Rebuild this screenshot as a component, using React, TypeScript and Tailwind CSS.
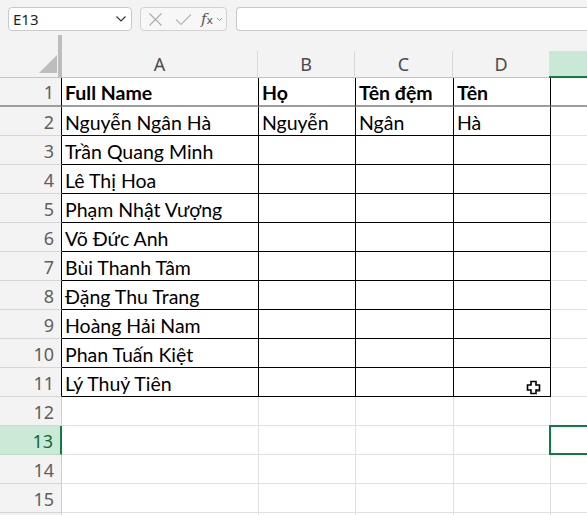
import React from "react";

const names = [
  "Nguyễn Ngân Hà",
  "Trần Quang Minh",
  "Lê Thị Hoa",
  "Phạm Nhật Vượng",
  "Võ Đức Anh",
  "Bùi Thanh Tâm",
  "Đặng Thu Trang",
  "Hoàng Hải Nam",
  "Phan Tuấn Kiệt",
  "Lý Thuỷ Tiên",
];

const cellFont = { fontFamily: "Lato, 'Noto Sans', sans-serif" };
const uiFont = { fontFamily: "'Noto Sans', 'Open Sans', sans-serif" };

function Cursor() {
  return (
    <svg
      width="16"
      height="16"
      viewBox="0 0 16 16"
      className="absolute left-[72px] top-[12px]"
    >
      <path
        d="M5 1.5h5v3.5h3.5v5H10v3.5H5V10H1.5V5H5z"
        fill="#fff"
        stroke="#000"
        strokeWidth="1.6"
        strokeLinejoin="miter"
      />
      <path d="M10.8 11h3.5M11 14.3h-0.2" stroke="#000" strokeWidth="1" />
    </svg>
  );
}

function DataRow({ n, cells, bold }: { n: number; cells: string[]; bold?: boolean }) {
  const first = n === 1;
  const bb = first ? "border-b-2 border-b-[#9d9d9d]" : "border-b border-b-black";
  const cellBase = `flex items-end pl-[3px] pb-[3px] text-[19.5px] leading-none text-black border-r border-r-black ${bb} ${
    bold ? "font-bold" : ""
  } whitespace-nowrap overflow-hidden`;
  return (
    <div className="flex h-[29px] shrink-0" style={cellFont}>
      <div
        className={`w-[62px] shrink-0 flex items-end justify-end pr-[7px] pb-[4px] bg-[#f3f3f3] text-[#5f5f5f] text-[18px] leading-none border-r border-r-black ${
          first ? "border-b-2 border-b-[#9d9d9d]" : "border-b border-b-[#d6d6d6]"
        }`}
        style={uiFont}
      >
        {n}
      </div>
      <div className={`w-[197px] shrink-0 ${cellBase}`}>{cells[0]}</div>
      <div className={`w-[97px] shrink-0 ${cellBase}`}>{cells[1]}</div>
      <div className={`w-[98px] shrink-0 ${cellBase}`}>{cells[2]}</div>
      <div className={`w-[97px] shrink-0 relative ${cellBase}`}>
        {cells[3]}
        {n === 11 && <Cursor />}
      </div>
      <div
        className={`flex-1 ${
          first ? "border-b-2 border-b-[#9d9d9d]" : "border-b border-b-[#e1e1e1]"
        }`}
      />
    </div>
  );
}

function EmptyRow({ n, label = true }: { n: number; label?: boolean }) {
  const sel = n === 13;
  const g = "border-r border-r-[#e1e1e1] border-b border-b-[#e1e1e1]";
  return (
    <div className="flex h-[29px] shrink-0">
      <div
        className={`w-[62px] shrink-0 flex items-end justify-end pb-[4px] text-[18px] leading-none border-b ${
          sel
            ? "bg-[#cbe9d7] text-[#0f6a37] border-r-2 border-r-[#107c41] border-b-[#bcd9c7] pr-[7px]"
            : "bg-[#f3f3f3] text-[#5f5f5f] border-r border-r-[#cfcfcf] border-b-[#d6d6d6] pr-[7px]"
        }`}
        style={uiFont}
      >
        {label ? n : null}
      </div>
      <div className={`w-[197px] shrink-0 ${g}`} />
      <div className={`w-[97px] shrink-0 ${g}`} />
      <div className={`w-[98px] shrink-0 ${g}`} />
      <div className={`w-[97px] shrink-0 ${g}`} />
      <div className="flex-1 relative border-b border-b-[#e1e1e1]">
        {sel && (
          <div className="absolute left-[-2px] top-[-1px] right-[-2px] bottom-[-1px] border-2 border-[#107c41]" />
        )}
      </div>
    </div>
  );
}

export default function App() {
  const rows: string[][] = [
    ["Full Name", "Họ", "Tên đệm", "Tên"],
    ["Nguyễn Ngân Hà", "Nguyễn", "Ngân", "Hà"],
    ...names.slice(1).map((x) => [x, "", "", ""]),
  ];

  return (
    <div className="w-[587px] h-[515px] overflow-hidden bg-[#f3f3f3] flex flex-col" style={uiFont}>
      {/* Formula bar */}
      <div className="h-[35px] shrink-0 flex items-start pt-[7px] pl-[8px]">
        <div className="w-[124px] h-[24px] bg-white border border-[#c9c9c9] rounded-[4px] flex items-center justify-between pl-[4px] pr-[4px]">
          <span className="text-[15px] text-[#1f1f1f] leading-none">E13</span>
          <svg width="12" height="8" viewBox="0 0 12 8">
            <path d="M1.5 1.5l4.5 4.5 4.5-4.5" fill="none" stroke="#333" strokeWidth="1.2" />
          </svg>
        </div>
        <div className="ml-[8px] w-[87px] h-[24px] bg-[#f7f7f7] border border-[#d2d2d2] rounded-[4px] flex items-center pl-[7px]">
          <svg width="15" height="15" viewBox="0 0 15 15">
            <path d="M1.5 1.5l12 12M13.5 1.5l-12 12" stroke="#ababab" strokeWidth="1.1" />
          </svg>
          <svg width="17" height="13" viewBox="0 0 17 13" className="ml-[12px]">
            <path d="M1 6.5l5 5L16 1.5" fill="none" stroke="#b5b5b5" strokeWidth="1.1" />
          </svg>
          <span
            className="ml-[9px] text-[#555] text-[15px] leading-none italic"
            style={{ fontFamily: "'DejaVu Serif', 'Liberation Serif', serif" }}
          >
            f<span className="text-[11px] not-italic" style={{ fontFamily: "'DejaVu Sans', sans-serif" }}>x</span>
          </span>
          <svg width="7" height="5" viewBox="0 0 7 5" className="ml-[3px]">
            <path d="M1 1l2.5 2.5L6 1" fill="none" stroke="#999" strokeWidth="1" />
          </svg>
        </div>
        <div className="ml-[9px] flex-1 h-[24px] bg-white border border-[#c9c9c9] border-r-0 rounded-l-[4px]" />
      </div>

      {/* Column headers */}
      <div className="flex h-[43px] shrink-0">
        <div className="w-[62px] shrink-0 h-[43px] border-r-[4px] border-r-[#bdbdbd] border-b border-b-[#c4c4c4] flex items-end justify-end pr-[1px] pb-[4px]">
          <svg width="18" height="18" viewBox="0 0 18 18">
            <path d="M18 0V18H0Z" fill="#bdbdbd" />
          </svg>
        </div>
        <div className="flex-1 flex flex-col">
          <div className="h-[16px]" />
          <div className="flex h-[27px] text-[18px] text-[#4b4b4b] leading-none">
            <div className="w-[196px] shrink-0 flex items-center justify-center border-r border-r-[#d9d9d9] border-b border-b-[#c4c4c4]">A</div>
            <div className="w-[97px] shrink-0 flex items-center justify-center border-r border-r-[#d9d9d9] border-b border-b-[#c4c4c4]">B</div>
            <div className="w-[98px] shrink-0 flex items-center justify-center border-r border-r-[#d9d9d9] border-b border-b-[#c4c4c4]">C</div>
            <div className="w-[97px] shrink-0 flex items-center justify-center border-r border-r-[#93d3ae] border-b border-b-[#c4c4c4]">D</div>
            <div className="flex-1 bg-[#c9e9d6] border-b-2 border-b-[#107c41] ml-[-1px]" />
          </div>
        </div>
      </div>

      {/* Grid */}
      <div className="flex flex-col bg-white">
        {rows.map((r, i) => (
          <DataRow key={i} n={i + 1} cells={r} bold={i === 0} />
        ))}
        {[12, 13, 14, 15].map((n) => (
          <EmptyRow key={n} n={n} />
        ))}
        <EmptyRow n={16} label={false} />
      </div>
    </div>
  );
}
